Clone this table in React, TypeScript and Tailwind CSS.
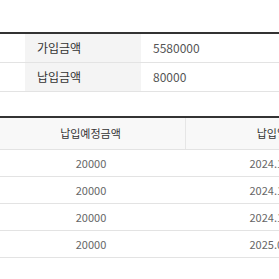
const summary = [
  { label: "가입금액", value: "5580000" },
  { label: "납입금액", value: "80000" },
];

const schedule = [
  { amount: "20000", date: "2024.10.25" },
  { amount: "20000", date: "2024.11.25" },
  { amount: "20000", date: "2024.12.25" },
  { amount: "20000", date: "2025.01.25" },
];

export default function App() {
  return (
    <div
      className="w-[279px] h-[279px] overflow-hidden bg-white pt-[32px]"
      style={{ fontFamily: '"Noto Sans CJK KR", "Noto Sans", sans-serif' }}
    >
      <div className="w-[400px] border-t-2 border-[#333]">
        {summary.map((row) => (
          <div
            key={row.label}
            className="grid h-[29px] grid-cols-[25px_116px_1fr] border-b border-[#e3e3e3]"
          >
            <div />
            <div className="flex items-center bg-[#f4f4f4] pl-[12px] text-[12px] text-[#333]">
              {row.label}
            </div>
            <div className="flex items-center pl-[12px] text-[12px] text-[#555]">
              {row.value}
            </div>
          </div>
        ))}
      </div>

      <div className="mt-[24px] w-[400px] border-t-2 border-[#333]">
        <div className="grid h-[32px] grid-cols-[186px_182px] border-b border-[#e3e3e3] bg-[#f8f8f8] text-[11px] text-[#333]">
          <div className="flex items-center justify-center border-r border-[#e6e6e6] pr-[4px]">
            납입예정금액
          </div>
          <div className="flex items-center justify-center">납입일자</div>
        </div>
        {schedule.map((row) => (
          <div
            key={row.date}
            className="grid h-[27px] grid-cols-[186px_182px] border-b border-[#e3e3e3] text-[11px] text-[#666]"
          >
            <div className="flex items-center justify-center pr-[4px]">
              {row.amount}
            </div>
            <div className="flex items-center justify-center">{row.date}</div>
          </div>
        ))}
      </div>
    </div>
  );
}
